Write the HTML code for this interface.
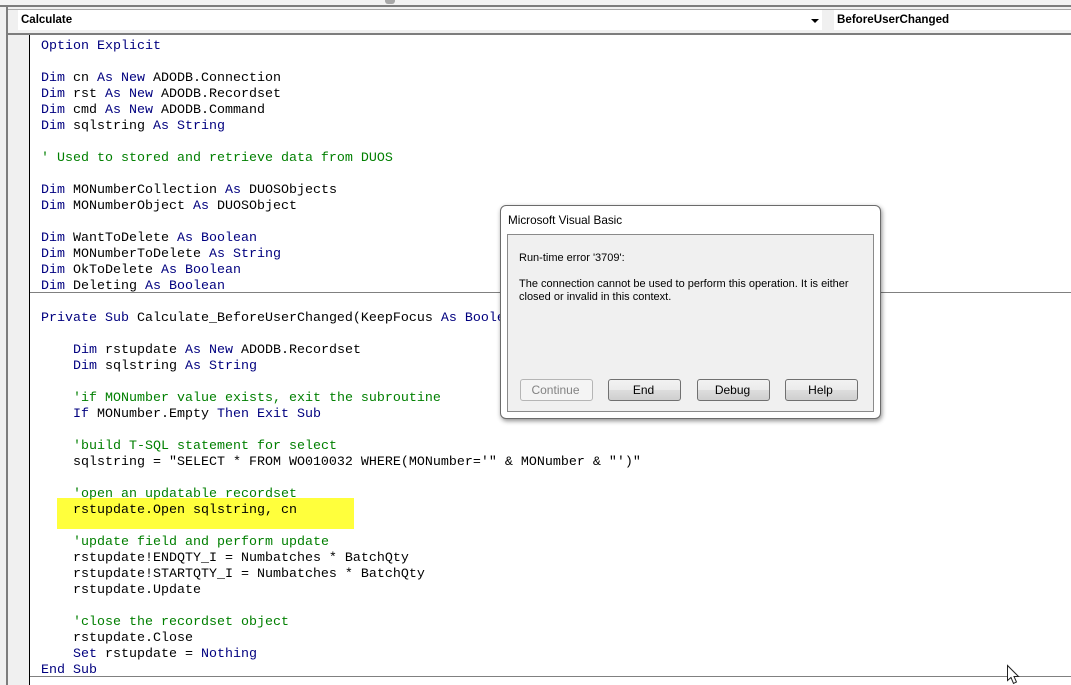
<!DOCTYPE html>
<html><head><meta charset="utf-8"><style>
html,body{margin:0;padding:0;background:#fff}
#r{position:relative;width:1071px;height:685px;overflow:hidden;background:#fff}
#r div{position:absolute}
pre{position:absolute;margin:0;left:41px;top:39px;font:13.33px/16px "Liberation Mono",monospace;color:#000}
b{font-weight:normal;color:#00007f}
i{font-style:normal;color:#007f00}
.ui{font-family:"Liberation Sans",sans-serif;white-space:nowrap;color:#000}
.btn{top:379px;width:71px;height:20px;border:1px solid #707070;border-radius:3px;background:linear-gradient(#f2f2f2 0,#ebebeb 50%,#dddddd 51%,#cfcfcf 100%);font:12px/20px "Liberation Sans",sans-serif;text-align:center;color:#000;text-indent:-2px}
</style></head><body><div id="r">
<div style="left:0;top:0;width:1071px;height:5px;background:#f3f3f3"></div>
<div style="left:385px;top:0;width:10px;height:4px;background:#a8a8a8;border-radius:0 0 3px 3px"></div>
<div style="left:0;top:5px;width:1071px;height:2px;background:#7d7d7d"></div>
<div style="left:0;top:7px;width:1071px;height:26px;background:#f0f0f0"></div>
<div style="left:6px;top:9px;width:1065px;height:1px;background:#a8a8a8"></div>
<div style="left:18px;top:10px;width:804px;height:20px;background:#fff"></div>
<div style="left:834px;top:10px;width:237px;height:20px;background:#fff"></div>
<div class="ui" style="left:21px;top:13px;font-size:11.5px;line-height:15px;font-weight:bold">Calculate</div>
<div class="ui" style="left:837px;top:12px;font-size:11.6px;line-height:15px;font-weight:bold">BeforeUserChanged</div>
<div style="left:811px;top:19px;width:0;height:0;border-left:4px solid transparent;border-right:4px solid transparent;border-top:4px solid #000"></div>
<div style="left:6px;top:33px;width:1065px;height:2px;background:#7d7d7d"></div>
<div style="left:0;top:7px;width:6px;height:678px;background:#f0f0f0"></div>
<div style="left:6px;top:7px;width:2px;height:678px;background:#7d7d7d"></div>
<div style="left:8px;top:35px;width:21px;height:650px;background:#f0f0f0"></div>
<div style="left:29px;top:35px;width:1px;height:650px;background:#000"></div>
<div style="left:30px;top:292px;width:1041px;height:1px;background:#808080"></div>
<div style="left:30px;top:676px;width:1041px;height:1px;background:#808080"></div>
<div style="left:57px;top:498px;width:297px;height:31px;background:#ffff3c"></div>
<pre><b>Option Explicit</b>

<b>Dim</b> cn <b>As New</b> ADODB.Connection
<b>Dim</b> rst <b>As New</b> ADODB.Recordset
<b>Dim</b> cmd <b>As New</b> ADODB.Command
<b>Dim</b> sqlstring <b>As String</b>

<i>' Used to stored and retrieve data from DUOS</i>

<b>Dim</b> MONumberCollection <b>As</b> DUOSObjects
<b>Dim</b> MONumberObject <b>As</b> DUOSObject

<b>Dim</b> WantToDelete <b>As Boolean</b>
<b>Dim</b> MONumberToDelete <b>As String</b>
<b>Dim</b> OkToDelete <b>As Boolean</b>
<b>Dim</b> Deleting <b>As Boolean</b>

<b>Private Sub</b> Calculate_BeforeUserChanged(KeepFocus <b>As Boolean</b>)

    <b>Dim</b> rstupdate <b>As New</b> ADODB.Recordset
    <b>Dim</b> sqlstring <b>As String</b>

    <i>'if MONumber value exists, exit the subroutine</i>
    <b>If</b> MONumber.Empty <b>Then Exit Sub</b>

    <i>'build T-SQL statement for select</i>
    sqlstring = "SELECT * FROM WO010032 WHERE(MONumber='" &amp; MONumber &amp; "')"

    <i>'open an updatable recordset</i>
    rstupdate.Open sqlstring, cn

    <i>'update field and perform update</i>
    rstupdate!ENDQTY_I = Numbatches * BatchQty
    rstupdate!STARTQTY_I = Numbatches * BatchQty
    rstupdate.Update

    <i>'close the recordset object</i>
    rstupdate.Close
    <b>Set</b> rstupdate = <b>Nothing</b>
<b>End Sub</b></pre>
<div style="left:500px;top:205px;width:379px;height:212px;background:#fff;border:1px solid #6b6b6b;border-radius:6px;box-shadow:1px 2px 5px rgba(0,0,0,.45)"></div>
<div class="ui" style="left:508px;top:213px;font-size:11.7px;line-height:16px">Microsoft Visual Basic</div>
<div style="left:507px;top:234px;width:365px;height:176px;background:#f0f0f0;border:1px solid #8a8a8a"></div>
<div class="ui" style="left:519px;top:251px;font-size:11px;line-height:14px">Run-time error '3709':</div>
<div class="ui" style="left:519px;top:278px;font-size:11px;line-height:13px">The connection cannot be used to perform this operation. It is either<br>closed or invalid in this context.</div>
<div class="btn" style="left:520px;background:#f4f4f4;border-color:#b5b5b5;color:#838383">Continue</div>
<div class="btn" style="left:608px">End</div>
<div class="btn" style="left:697px">Debug</div>
<div class="btn" style="left:785px">Help</div>
<svg style="position:absolute;left:1005px;top:664px" width="16" height="22" viewBox="0 0 16 22"><path d="M2.5 1.5V16.5L6 13.5L8.5 19.5L11.5 18L9 12.5H13.5Z" fill="#fff" stroke="#222" stroke-width="1"/></svg>
</div></body></html>
